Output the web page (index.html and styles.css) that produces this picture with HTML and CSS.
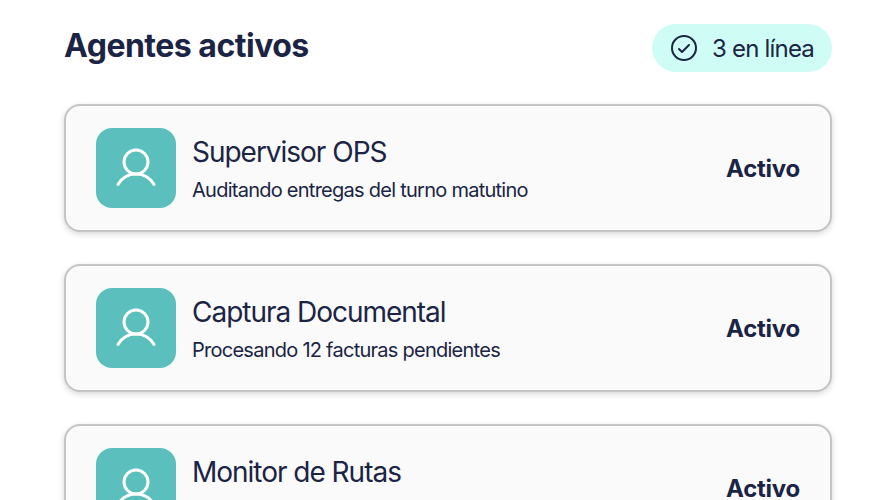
FILE: index.html
```html
<!DOCTYPE html>
<html lang="es">
<head>
    <meta charset="UTF-8">
    <meta name="viewport" content="width=device-width, initial-scale=1.0">
    <title>Agentes activos</title>
    <link rel="stylesheet" href="styles.css">
</head>
<body>
    <svg class="sprite" aria-hidden="true">
        <symbol id="icon-user" viewBox="0 0 256 256">
            <circle cx="128" cy="96" r="64"/>
            <path d="M32 216c19.37-33.47 54.55-56 96-56s76.63 22.53 96 56"/>
        </symbol>
    </svg>

    <main class="container">
        <header class="header">
            <h1>Agentes activos</h1>
            <div class="badge">
                <svg class="icon badge-icon" viewBox="0 0 256 256">
                    <circle cx="128" cy="128" r="96"/>
                    <path d="M88 136l24 24 56-56"/>
                </svg>
                <span class="badge-text">3 en línea</span>
            </div>
        </header>

        <section class="agent-list">
            <article class="agent-card">
                <div class="avatar"><svg class="icon"><use href="#icon-user"/></svg></div>
                <div class="agent-info">
                    <h2>Supervisor OPS</h2>
                    <p>Auditando entregas del turno matutino</p>
                </div>
                <span class="status">Activo</span>
            </article>
            <article class="agent-card">
                <div class="avatar"><svg class="icon"><use href="#icon-user"/></svg></div>
                <div class="agent-info">
                    <h2>Captura Documental</h2>
                    <p>Procesando 12 facturas pendientes</p>
                </div>
                <span class="status">Activo</span>
            </article>
            <article class="agent-card">
                <div class="avatar"><svg class="icon"><use href="#icon-user"/></svg></div>
                <div class="agent-info">
                    <h2>Monitor de Rutas</h2>
                    <p></p>
                </div>
                <span class="status">Activo</span>
            </article>
        </section>
    </main>
</body>
</html>
```
FILE: styles.css
```css
* {
    box-sizing: border-box;
}

body {
    margin: 0;
    height: 500px;
    overflow: hidden;
    background: #fff;
    color: #1b2444;
    font-family: Inter, "Liberation Sans", sans-serif;
}

h1, h2, p {
    margin: 0;
}

.sprite {
    display: none;
}

.container {
    padding: 24px 64px;
}

/* Header */
.header {
    display: flex;
    align-items: flex-start;
    justify-content: space-between;
    height: 48px;
    margin-bottom: 32px;
}

h1 {
    font-size: 32px;
    line-height: 43px;
    font-weight: 700;
    letter-spacing: -0.5px;
    white-space: nowrap;
}

.badge {
    display: flex;
    align-items: center;
    gap: 12px;
    width: 180px;
    height: 48px;
    padding: 0 16px;
    border-radius: 24px;
    background: #cffdf6;
}

.badge-text {
    font-size: 24px;
    letter-spacing: -0.8px;
    white-space: nowrap;
}

/* Icons */
.icon {
    width: 48px;
    height: 48px;
    fill: none;
    stroke: currentColor;
    stroke-width: 16;
    stroke-linecap: round;
    stroke-linejoin: round;
}

.badge-icon {
    flex-shrink: 0;
    width: 32px;
    height: 32px;
}

/* Agents */
.agent-list {
    display: flex;
    flex-direction: column;
    gap: 32px;
}

.agent-card {
    display: flex;
    align-items: center;
    gap: 16px;
    height: 128px;
    padding: 0 30px;
    border: 2px solid #c4c4c4;
    border-radius: 16px;
    background: #fafafa;
    box-shadow: 0 2px 6px rgba(0, 0, 0, 0.16);
}

.avatar {
    display: flex;
    align-items: center;
    justify-content: center;
    width: 80px;
    height: 80px;
    border-radius: 16px;
    background: #5bbfbd;
    color: #fff;
}

.agent-info {
    flex: 1;
    padding-top: 2px;
    white-space: nowrap;
}

.agent-info h2 {
    font-size: 28px;
    line-height: 42px;
    font-weight: 400;
    letter-spacing: -1.02px;
}

.agent-info p {
    height: 35px;
    font-size: 20px;
    line-height: 35px;
    letter-spacing: -0.74px;
}

.status {
    font-size: 24px;
    font-weight: 700;
    letter-spacing: -0.25px;
}
```
